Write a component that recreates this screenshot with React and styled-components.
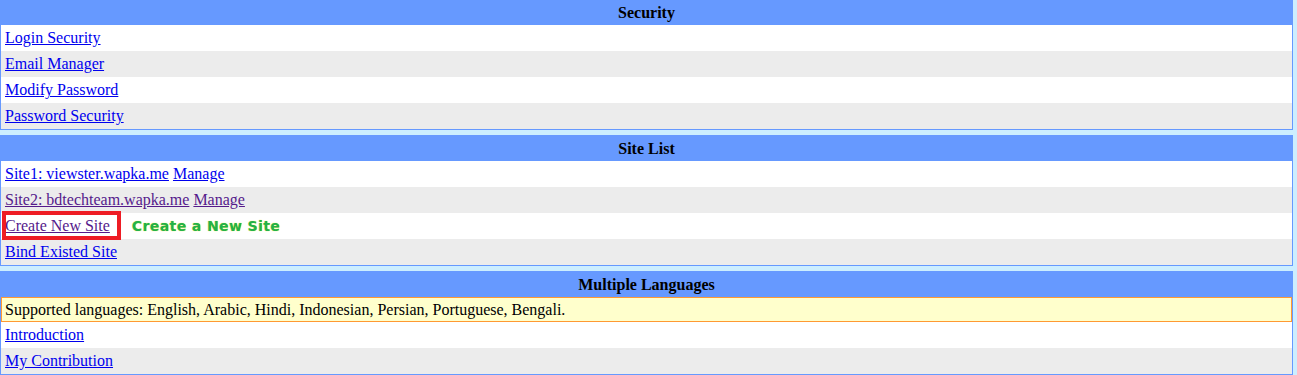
import React from "react";
import styled, { createGlobalStyle } from "styled-components";

const GlobalStyle = createGlobalStyle`
  html, body {
    margin: 0;
    padding: 0;
    background: #cceeff;
  }
  body {
    font-family: "Liberation Serif", "Times New Roman", serif;
    font-size: 16px;
    color: #000;
  }
`;

const sections = [
  {
    title: "Security",
    rows: [
      { links: [{ text: "Login Security" }] },
      { links: [{ text: "Email Manager" }] },
      { links: [{ text: "Modify Password" }] },
      { links: [{ text: "Password Security" }] },
    ],
  },
  {
    title: "Site List",
    rows: [
      { links: [{ text: "Site1: viewster.wapka.me" }, { text: "Manage" }] },
      {
        links: [
          { text: "Site2: bdtechteam.wapka.me", visited: true },
          { text: "Manage", visited: true },
        ],
      },
      { links: [{ text: "Create New Site", visited: true, marked: true }], note: "Create a New Site" },
      { links: [{ text: "Bind Existed Site" }] },
    ],
  },
  {
    title: "Multiple Languages",
    notice:
      "Supported languages: English, Arabic, Hindi, Indonesian, Persian, Portuguese, Bengali.",
    rows: [
      { links: [{ text: "Introduction" }] },
      { links: [{ text: "My Contribution" }] },
    ],
  },
];

const Page = styled.div`
  display: flex;
  flex-direction: column;
  gap: 5px;
  margin-top: -1px;
  padding-right: 4px;
`;

const Box = styled.div`
  border: 1px solid #6699ff;
  background: #fff;
`;

const Header = styled.div`
  background: #6699ff;
  height: 26px;
  line-height: 27px;
  margin: -1px -1px 0;
  text-align: center;
  font-weight: bold;
`;

const Row = styled.div`
  height: 26px;
  line-height: 26px;
  padding-left: 4px;
  display: flex;
  align-items: center;
  gap: 4px;
  background: ${(p) => (p.$odd ? "#ececec" : "#ffffff")};
`;

const Link = styled.a`
  position: relative;
  color: ${(p) => (p.$visited ? "#551a8b" : "#0000ee")};
  text-decoration: underline;
  cursor: pointer;
  ${(p) =>
    p.$marked &&
    `
    &::after {
      content: "";
      position: absolute;
      z-index: 1;
      left: -3px;
      right: -11px;
      top: -2px;
      bottom: -1px;
      border: 4px solid #ee1c24;
    }
  `}
`;

const Note = styled.span`
  margin-left: 18px;
  font-family: "Comic Sans MS", "DejaVu Sans", sans-serif;
  font-weight: bold;
  font-size: 14px;
  letter-spacing: 0.4px;
  color: #22b14c;
  text-shadow: 0 0 1px #e6e600;
`;

const Notice = styled.div`
  height: 23px;
  line-height: 24px;
  padding-left: 3px;
  background: #ffffcc;
  border: 1px solid #ff9933;
`;

function App() {
  return (
    <>
      <GlobalStyle />
      <Page>
        {sections.map((section) => (
          <Box key={section.title}>
            <Header>{section.title}</Header>
            {section.notice && <Notice>{section.notice}</Notice>}
            {section.rows.map((row, j) => (
              <Row key={j} $odd={j % 2 === 1}>
                {row.links.map((link, k) => (
                  <Link key={k} $visited={link.visited} $marked={link.marked}>
                    {link.text}
                  </Link>
                ))}
                {row.note && <Note>{row.note}</Note>}
              </Row>
            ))}
          </Box>
        ))}
      </Page>
    </>
  );
}

export default App;
